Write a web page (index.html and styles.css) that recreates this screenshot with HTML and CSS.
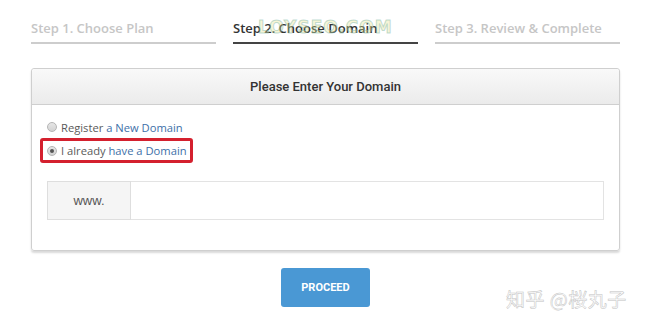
FILE: index.html
```html
<!DOCTYPE html>
<html lang="en">
<head>
    <meta charset="UTF-8">
    <title>Choose Domain</title>
    <link rel="stylesheet" href="styles.css">
</head>
<body>
    <div class="page">
        <div class="steps">
            <div class="step">Step 1. Choose Plan</div>
            <div class="step active">Step 2. Choose Domain</div>
            <div class="step">Step 3. Review &amp; Complete</div>
        </div>
        <div class="mark-site">LOYSEO.COM</div>

        <div class="panel">
            <div class="panel-head">Please Enter Your Domain</div>
            <div class="panel-body">
                <div class="option">
                    <span class="radio"></span>
                    <span>Register <a href="#">a New Domain</a></span>
                </div>
                <div class="option picked">
                    <span class="radio on"></span>
                    <span>I already <a href="#">have a Domain</a></span>
                </div>
                <div class="domain">
                    <span class="addon">www.</span>
                    <input type="text" class="domain-input">
                </div>
            </div>
        </div>

        <div class="actions">
            <button type="button" class="btn-go">PROCEED</button>
        </div>
    </div>
    <div class="mark-zhihu">知乎 @桜丸子</div>
</body>
</html>
```

FILE: styles.css
```css
body{
    margin: 0;
    background: #fff;
    font-family: "Open Sans", "Liberation Sans", sans-serif;
}
.page{
    width: 589px;
    margin-left: 31px;
    position: relative;
}
.steps{
    display: flex;
    gap: 17px;
    padding-top: 18px;
}
.step{
    flex: 1;
    font-size: 13px;
    font-weight: 600;
    line-height: 20px;
    color: #c6c6c6;
    padding-bottom: 4px;
    border-bottom: 2px solid #cdcdcd;
}
.step.active{
    color: #333;
    border-bottom-color: #444;
}
.mark-site{
    position: absolute;
    left: 227px;
    top: 17px;
    font-family: "DejaVu Sans", sans-serif;
    font-size: 17px;
    font-weight: bold;
    letter-spacing: 1px;
    color: rgba(230, 225, 140, 0.35);
    -webkit-text-stroke: 1px rgba(120, 180, 165, 0.45);
}
.panel{
    margin-top: 24px;
    border: 1px solid #cfcfcf;
    border-radius: 3px;
    box-shadow: 0 2px 2px rgba(0, 0, 0, 0.15);
}
.panel-head{
    height: 35px;
    line-height: 35px;
    text-align: center;
    font-family: Roboto, "Liberation Sans", sans-serif;
    font-size: 13px;
    font-weight: 500;
    color: #333;
    background: linear-gradient(#f9f9f9, #ebebeb);
    border-bottom: 1px solid #cfcfcf;
    border-radius: 3px 3px 0 0;
}
.panel-body{
    padding: 12px 15px 30px 15px;
}
.option{
    display: flex;
    align-items: center;
    gap: 4px;
    width: fit-content;
    height: 20px;
    font-size: 11.2px;
    white-space: nowrap;
    color: #5a5a5a;
}
.option a{
    color: #3d6fa8;
    text-decoration: none;
}
.option.picked{
    margin-top: 1px;
    margin-left: -7px;
    padding: 0 3px 0 4px;
    height: 19px;
    border: 3px solid #d4202e;
    border-radius: 3px;
}
.radio{
    width: 8px;
    height: 8px;
    border-radius: 50%;
    border: 1px solid #b5b5b5;
    background: linear-gradient(#e6e6e6, #d2d2d2);
    position: relative;
}
.radio.on::after{
    content: "";
    position: absolute;
    left: 2px;
    top: 2px;
    width: 4px;
    height: 4px;
    border-radius: 50%;
    background: #555;
}
.domain{
    display: flex;
    margin-top: 18px;
    height: 39px;
}
.addon{
    width: 82px;
    border: 1px solid #dedede;
    background: #f5f5f5;
    color: #555;
    font-family: "Liberation Sans", Arial, sans-serif;
    font-size: 13px;
    display: flex;
    align-items: center;
    justify-content: center;
}
.domain-input{
    flex: 1;
    margin: 0;
    border: 1px solid #e3e3e3;
    border-left: none;
    outline: none;
    box-sizing: border-box;
    height: 39px;
}
.actions{
    display: flex;
    justify-content: center;
    margin-top: 17px;
}
.btn-go{
    width: 89px;
    height: 39px;
    border: none;
    border-radius: 3px;
    background: #4a98d4;
    color: #fff;
    font-family: Roboto, "Liberation Sans", sans-serif;
    font-size: 11px;
    font-weight: bold;
}
.mark-zhihu{
    position: absolute;
    left: 506px;
    top: 285px;
    font-family: "Noto Sans CJK SC", sans-serif;
    font-size: 19px;
    color: #fff;
    -webkit-text-stroke: 0.5px #c2c2c2;
    letter-spacing: 0.5px;
}
```
